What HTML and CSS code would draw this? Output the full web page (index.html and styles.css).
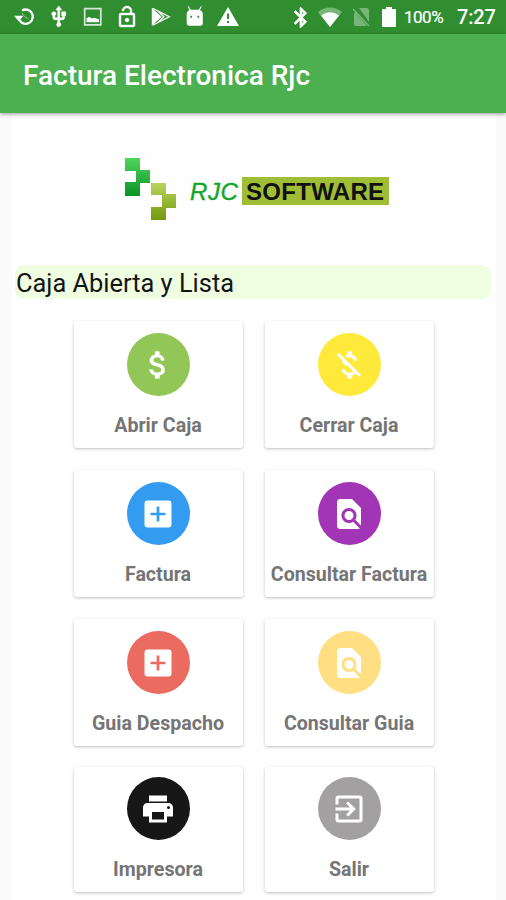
FILE: index.html
```html
<!DOCTYPE html>
<html lang="es">
<head>
<meta charset="utf-8">
<title>Factura Electronica Rjc</title>
<link rel="stylesheet" href="styles.css">
</head>
<body>
<div class="status">
  <div class="notifications">
    <svg viewBox="0 0 24 24"><path d="M5 12a8 8 0 1 0 4-7" fill="none" stroke="#fff" stroke-width="2.600"/><path d="M0 11h10.500L5.200 17z"/><path d="M9 8l4 5 3 1" fill="none" stroke="#fff" stroke-width="1" opacity=".5"/></svg>
    <svg class="usb" viewBox="0 0 24 24"><path stroke="#fff" stroke-width=".6" d="M15 7v4h1v2h-3V5h2l-3-4-3 4h2v8H8v-2.070c.7-.37 1.200-1.080 1.200-1.930 0-1.210-.99-2.200-2.200-2.200S4.800 7.790 4.800 9c0 .85.5 1.560 1.200 1.930V13c0 1.110.890 2 2 2h3v3.050c-.71.370-1.200 1.100-1.200 1.950a2.200 2.200 0 0 0 4.400 0c0-.85-.49-1.580-1.200-1.950V15h3c1.110 0 2-.890 2-2v-2h1V7z"/></svg>
    <svg viewBox="0 0 24 24"><path d="M3 3h18v18H3z" fill="none" stroke="#fff" stroke-width="1.900" opacity=".8"/><path d="M5 18v-4l3-2 3 2 3-1 5 2v3z"/></svg>
    <svg class="tall" viewBox="0 0 24 24"><path stroke="#fff" stroke-width=".4" d="M12 17a2 2 0 1 0 0-4 2 2 0 0 0 0 4zm6-9h-1V6A5 5 0 0 0 7 6h1.900a3.100 3.100 0 0 1 6.200 0v2H6a2 2 0 0 0-2 2v10a2 2 0 0 0 2 2h12a2 2 0 0 0 2-2V10a2 2 0 0 0-2-2zm0 12H6V10h12z"/></svg>
    <svg viewBox="0 0 24 24"><path d="M2 2v20l11-10z"/><path d="M3 2.500 21.500 12 3 21.500M9 6l6.500 6L9 18" fill="none" stroke="#fff" stroke-width="1.500"/></svg>
    <svg viewBox="0 0 24 24"><path fill-rule="evenodd" d="M5 0l2.500 4.300h9L19 0l.8.500-2 4.300C20 5.300 21 7 21 9v10q0 3-3 3H6q-3 0-3-3V9c0-2 1-3.700 3.200-4.200l-2-4.300zM7 11v2h2v-2zm8 0v2h2v-2z"/></svg>
    <svg class="tall" viewBox="0 0 24 24"><path d="M1 21h22L12 2zm12-3h-2v-2h2zm0-4h-2V8.500h2z"/></svg>
  </div>
  <div class="system">
    <svg class="bt" viewBox="5 2 14 20"><path stroke="#fff" stroke-width=".7" d="M17.710 7.710L12 2h-1v7.590L6.410 5 5 6.410 10.590 12 5 17.590 6.410 19 11 14.410V22h1l5.710-5.710-4.300-4.290zM13 5.830l1.880 1.880L13 9.590zm1.880 10.460L13 18.170v-3.760z"/></svg>
    <svg class="wifi" viewBox="0 0 24 20"><path opacity=".35" d="M0 5C7-1 17-1 24 5L12 20z"/><path d="M3 8.500q9-6.500 18 0L12 20z"/></svg>
    <svg class="sim" viewBox="0 0 18 20"><path opacity=".35" d="M7 1h8q2 0 2 2v12zM3 5l12 14H4q-2 0-2-2V7z"/><path d="M1 2l16 17" stroke="#fff" stroke-width="1.200" opacity=".4"/></svg>
    <svg class="battery" viewBox="0 0 14 20"><path d="M4 0h6v2h3q1 0 1 1v16q0 1-1 1H1q-1 0-1-1V3q0-1 1-1h3z"/></svg>
    <span class="percent">100%</span>
    <span class="clock">7:27</span>
  </div>
</div>
<header class="appbar">Factura Electronica Rjc</header>
<main class="page">
  <div class="logo">
    <svg class="mark" viewBox="0 0 52 63">
      <defs>
        <linearGradient id="green" x2="0" y2="1"><stop stop-color="#50d65c"/><stop offset="1" stop-color="#079326"/></linearGradient>
        <linearGradient id="olive" x2="0" y2="1"><stop stop-color="#b9d35d"/><stop offset="1" stop-color="#75990f"/></linearGradient>
      </defs>
      <path fill="url(#green)" d="M0 0h15v12h10v13H15v13H0V24h11V13H0z"/>
      <path fill="url(#olive)" d="M26 25h15v11h10v14H41v12H26V49h11V37H26z"/>
    </svg>
    <span class="rjc">RJC</span><span class="software">SOFTWARE</span>
  </div>
  <div class="state">Caja Abierta y Lista</div>
  <div class="grid">
    <div class="card"><div class="disc lime"><svg viewBox="0 0 24 24"><path d="M11.800 10.900c-2.270-.59-3-1.200-3-2.150 0-1.090 1.010-1.850 2.700-1.850 1.780 0 2.440.85 2.500 2.100h2.210c-.07-1.720-1.120-3.300-3.210-3.810V3h-3v2.160c-1.940.42-3.500 1.680-3.500 3.610 0 2.310 1.910 3.460 4.700 4.130 2.500.6 3 1.480 3 2.410 0 .69-.49 1.790-2.700 1.790-2.060 0-2.870-.92-2.980-2.100h-2.200c.12 2.190 1.760 3.420 3.680 3.830V21h3v-2.150c1.950-.37 3.500-1.500 3.500-3.550 0-2.840-2.430-3.810-4.700-4.400z"/></svg></div><span>Abrir Caja</span></div>
    <div class="card"><div class="disc yellow"><svg viewBox="0 0 24 24"><path d="M12.500 6.900c1.780 0 2.440.85 2.500 2.100h2.210c-.07-1.720-1.120-3.300-3.210-3.810V3h-3v2.160c-.53.12-1.030.3-1.480.54l1.470 1.470c.41-.17.910-.27 1.510-.27zM5.330 4.060L4.060 5.330 7.500 8.770c0 2.080 1.560 3.210 3.910 3.910l3.510 3.510c-.34.480-1.050.91-2.420.91-2.060 0-2.870-.92-2.980-2.100h-2.200c.12 2.190 1.760 3.420 3.680 3.830V21h3v-2.150c.96-.18 1.820-.55 2.450-1.120l2.220 2.220 1.270-1.270z"/></svg></div><span>Cerrar Caja</span></div>
    <div class="card"><div class="disc blue"><svg viewBox="0 0 24 24"><path d="M19 3H5a2 2 0 0 0-2 2v14a2 2 0 0 0 2 2h14a2 2 0 0 0 2-2V5a2 2 0 0 0-2-2zm-2 9.900h-4.100v4.100h-1.800v-4.100H7v-1.800h4.100V7h1.800v4.100h4.100z"/></svg></div><span>Factura</span></div>
    <div class="card"><div class="disc purple"><svg viewBox="0 0 24 24"><path d="M20 19.590V8l-6-6H6c-1.100 0-1.990.9-1.990 2L4 20c0 1.100.890 2 1.990 2H18c.45 0 .85-.15 1.190-.4l-4.430-4.430c-.8.520-1.740.830-2.760.830-2.760 0-5-2.240-5-5s2.240-5 5-5 5 2.240 5 5c0 1.020-.31 1.960-.83 2.750zM9 13a3 3 0 1 0 6 0 3 3 0 0 0-6 0z"/></svg></div><span>Consultar Factura</span></div>
    <div class="card"><div class="disc red"><svg viewBox="0 0 24 24"><path d="M19 3H5a2 2 0 0 0-2 2v14a2 2 0 0 0 2 2h14a2 2 0 0 0 2-2V5a2 2 0 0 0-2-2zm-2 9.900h-4.100v4.100h-1.800v-4.100H7v-1.800h4.100V7h1.800v4.100h4.100z"/></svg></div><span>Guia Despacho</span></div>
    <div class="card"><div class="disc amber"><svg viewBox="0 0 24 24"><path d="M20 19.590V8l-6-6H6c-1.100 0-1.990.9-1.990 2L4 20c0 1.100.890 2 1.990 2H18c.45 0 .85-.15 1.190-.4l-4.430-4.430c-.8.520-1.740.830-2.760.830-2.760 0-5-2.240-5-5s2.240-5 5-5 5 2.240 5 5c0 1.020-.31 1.960-.83 2.750zM9 13a3 3 0 1 0 6 0 3 3 0 0 0-6 0z"/></svg></div><span>Consultar Guia</span></div>
    <div class="card last"><div class="disc black"><svg viewBox="0 0 24 24"><path d="M19 8H5c-1.660 0-3 1.340-3 3v6h4v4h12v-4h4v-6c0-1.660-1.340-3-3-3zm-3 11H8v-5h8zm3-7a1 1 0 1 1 0-2 1 1 0 0 1 0 2zm-1-9H6v4h12z"/></svg></div><span>Impresora</span></div>
    <div class="card last"><div class="disc gray"><svg viewBox="0 0 24 24"><path d="M10.090 15.590L11.500 17l5-5-5-5-1.410 1.410L12.670 11H3v2h9.670zM19 3H5a2 2 0 0 0-2 2v4h2V5h14v14H5v-4H3v4a2 2 0 0 0 2 2h14a2 2 0 0 0 2-2V5a2 2 0 0 0-2-2z"/></svg></div><span>Salir</span></div>
  </div>
</main>
</body>
</html>
```
FILE: styles.css
```css
* { box-sizing: border-box; }
body {
  margin: 0;
  height: 900px;
  overflow: hidden;
  background: #fafafa;
  font-family: Roboto, "Liberation Sans", sans-serif;
}
svg { display: block; fill: #fff; flex: none; }
.status {
  height: 34px;
  padding: 0 11px 0 14px;
  background: #308e30;
  display: flex;
  justify-content: space-between;
  color: #fff;
}
.notifications { display: flex; align-items: center; gap: 12.500px; }
.notifications svg { width: 21.500px; height: 21.500px; }
.notifications .tall { width: 24px; height: 24px; margin: 0 -1.500px; }
.notifications .usb { width: 23.500px; height: 23.500px; margin: 0 -1px; }
.system { display: flex; align-items: center; }
.bt { width: 14px; height: 21px; margin-right: 10px; }
.wifi { width: 24px; height: 20px; margin-right: 10px; }
.sim { width: 18px; height: 20px; margin-right: 12px; }
.battery { width: 14px; height: 20px; margin-right: 8px; }
.percent { width: 40px; font-size: 17px; line-height: 36px; margin-right: 13px; letter-spacing: -.5px; white-space: nowrap; -webkit-text-stroke: .2px #fff; }
.clock { font-size: 20px; line-height: 37px; font-weight: 500; width: 38px; letter-spacing: -.2px; }
.appbar {
  position: relative;
  height: 79px;
  padding-left: 23px;
  background: #4caf50;
  color: #fff;
  font-size: 28px;
  font-weight: 500;
  line-height: 83px;
  box-shadow: 0 1px 4px rgba(0, 0, 0, .4);
}
.page {
  height: 787px;
  margin: 0 10px 0 12px;
  padding-top: 45px;
  background: #fefefe;
}
.logo {
  height: 63px;
  margin-left: 113px;
  display: flex;
  align-items: flex-start;
  font-family: "Liberation Sans", Arial, sans-serif;
  font-size: 24px;
  line-height: 29px;
}
.mark { width: 52px; height: 63px; }
.rjc { width: 52px; margin: 19px 0 0 12px; padding-left: 1px; color: #16a528; font-style: italic; letter-spacing: .6px; -webkit-text-stroke: .4px #16a528; }
.software { width: 147px; height: 28px; margin: 19px 0 0 1px; padding-left: 4px; background: #a0bd36; color: #111; font-weight: 700; letter-spacing: .3px; }
.state {
  height: 34px;
  margin: 44px 5px 0 3px;
  padding-left: 1px;
  border-radius: 9px;
  background: #effde0;
  color: #151515;
  font-size: 25.400px;
  line-height: 37px;
}
.grid {
  display: grid;
  grid-template-columns: 169px 169px;
  gap: 22px;
  margin: 22px 0 0 61.500px;
}
.card {
  height: 127px;
  padding-top: 12px;
  border-radius: 3px;
  background: #fff;
  box-shadow: 0 1px 3px rgba(0, 0, 0, .25);
  display: flex;
  flex-direction: column;
  align-items: center;
  color: #757575;
  font-size: 19.600px;
  font-weight: 700;
  line-height: 24px;
  white-space: nowrap;
}
.card span { margin-top: 18px; }
.card.last { height: 125px; margin-top: -1px; padding-top: 10px; }
.disc {
  width: 63px;
  height: 63px;
  border-radius: 50%;
  display: flex;
  flex: none;
  align-items: center;
  justify-content: center;
}
.disc svg { width: 36px; height: 36px; }
.lime svg, .yellow svg { stroke: #fff; stroke-width: .2px; }
.lime { background: #92c657; }
.yellow { background: #ffe93b; }
.blue { background: #349cf0; }
.purple { background: #a135b5; }
.red { background: #eb6b61; }
.amber { background: #ffdf82; }
.black { background: #171717; }
.gray { background: #a3a0a1; }
```
